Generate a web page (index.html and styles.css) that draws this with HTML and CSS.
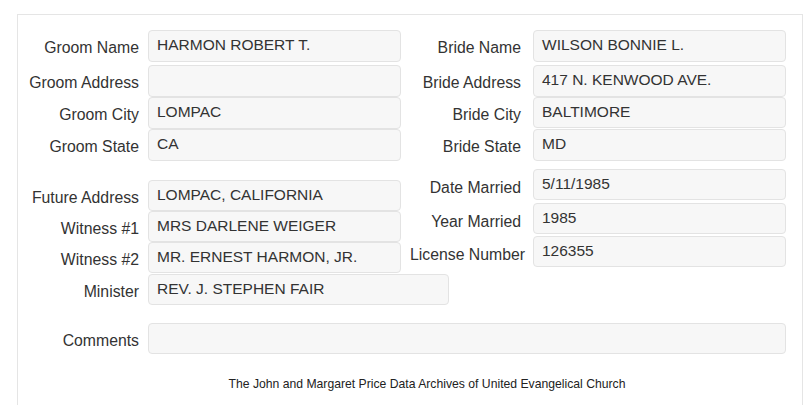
FILE: index.html
```html
<!DOCTYPE html>
<html>
<head>
<meta charset="utf-8">
<link rel="stylesheet" href="styles.css">
</head>
<body>
<div class="panel">
  <div class="cols">
    <div class="col col-left">
      <div class="row r-gn"><div class="lbl">Groom Name</div><div class="box">HARMON ROBERT T.</div></div>
      <div class="row r-ga"><div class="lbl">Groom Address</div><div class="box"></div></div>
      <div class="row r-gc"><div class="lbl">Groom City</div><div class="box">LOMPAC</div></div>
      <div class="row r-gs"><div class="lbl">Groom State</div><div class="box">CA</div></div>
      <div class="row r-fa"><div class="lbl">Future Address</div><div class="box short">LOMPAC, CALIFORNIA</div></div>
      <div class="row r-w1"><div class="lbl">Witness #1</div><div class="box short">MRS DARLENE WEIGER</div></div>
      <div class="row r-w2"><div class="lbl">Witness #2</div><div class="box short">MR. ERNEST HARMON, JR.</div></div>
      <div class="row r-mi"><div class="lbl">Minister</div><div class="box wide short">REV. J. STEPHEN FAIR</div></div>
    </div>
    <div class="col col-right">
      <div class="row r-bn"><div class="lbl">Bride Name</div><div class="box">WILSON BONNIE L.</div></div>
      <div class="row r-ba"><div class="lbl">Bride Address</div><div class="box">417 N. KENWOOD AVE.</div></div>
      <div class="row r-bc"><div class="lbl">Bride City</div><div class="box short">BALTIMORE</div></div>
      <div class="row r-bs"><div class="lbl">Bride State</div><div class="box">MD</div></div>
      <div class="row r-dm low"><div class="lbl">Date Married</div><div class="box short">5/11/1985</div></div>
      <div class="row r-ym low"><div class="lbl">Year Married</div><div class="box short">1985</div></div>
      <div class="row r-ln low"><div class="lbl">License Number</div><div class="box short">126355</div></div>
    </div>
  </div>
  <div class="row r-cm"><div class="lbl">Comments</div><div class="box comments short"></div></div>
  <div class="footer">The John and Margaret Price Data Archives of United Evangelical Church</div>
</div>
</body>
</html>
```
FILE: styles.css
```css
html, body {
  margin: 0;
  padding: 0;
  background: #ffffff;
}
body {
  font-family: "Liberation Sans", Arial, sans-serif;
  color: #333333;
  font-size: 15.5px;
}
.panel {
  margin: 14px 2px 0 17px;
  border: 1px solid #e5e5e5;
  border-bottom: none;
  padding-top: 15px;
  height: 400px;
  box-sizing: border-box;
}
.cols {
  display: flex;
}
.col-left {
  width: 383px;
  flex-shrink: 0;
}
.col-right {
  width: 392px;
  margin-left: 9px;
  flex-shrink: 0;
}
.row {
  display: flex;
  align-items: center;
}
.lbl {
  flex-shrink: 0;
  white-space: nowrap;
  text-align: right;
  color: #333333;
  padding-top: 4px;
  font-size: 15.8px;
}
.row.low .lbl {
  padding-top: 6px;
}
.col-left .lbl, .r-cm .lbl {
  width: 121px;
  margin-right: 9px;
}
.col-right .lbl {
  width: 111px;
  margin-right: 12px;
}
.box {
  flex-shrink: 0;
  box-sizing: border-box;
  height: 32px;
  line-height: 28px;
  padding: 0 8px;
  background: #f7f7f7;
  border: 1px solid #e3e3e3;
  border-radius: 4px;
  white-space: nowrap;
  color: #333333;
}
.box.short {
  height: 31px;
  line-height: 27px;
}
.col-left .box {
  width: 253px;
}
.col-left .box.wide {
  width: 301px;
}
.col-right .box {
  width: 253px;
}
.r-ga, .r-ba { margin-top: 3px; }
.r-fa { margin-top: 19px; }
.r-mi { margin-top: 1px; }
.r-bs { margin-top: 1px; }
.r-dm { margin-top: 8px; }
.r-ym { margin-top: 3px; }
.r-ln { margin-top: 2px; }
.r-cm {
  margin-top: 18px;
}
.comments {
  width: 638px;
}
.footer {
  text-align: center;
  font-size: 12.2px;
  color: #222222;
  margin-top: 23px;
  padding-left: 34px;
}
```
